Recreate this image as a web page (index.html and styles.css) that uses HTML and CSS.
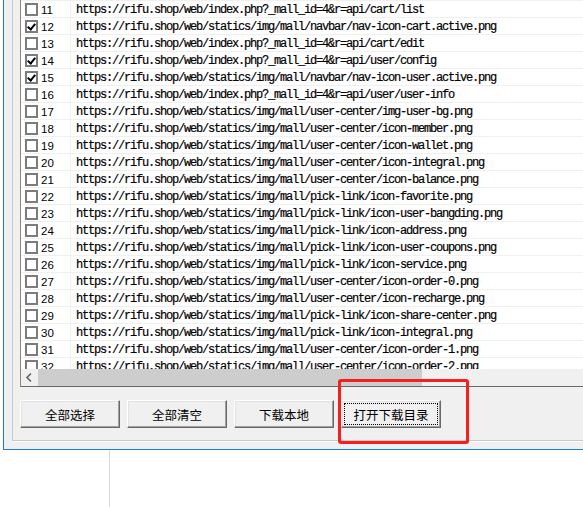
FILE: index.html
```html
<!DOCTYPE html>
<html>
<head>
    <title>下载列表</title>
    <meta charset="UTF-8">
    <link rel="stylesheet" href="styles.css">
</head>
<body>
    <div class="window">
        <div class="group">
            <div class="list">
                <div class="rows">
                    <div class="row"><span class="cell-no"><i class="box"></i>11</span><span class="cell-url">https://rifu.shop/web/index.php?_mall_id=4&amp;r=api/cart/list</span></div>
                    <div class="row"><span class="cell-no"><i class="box checked"></i>12</span><span class="cell-url">https://rifu.shop/web/statics/img/mall/navbar/nav-icon-cart.active.png</span></div>
                    <div class="row"><span class="cell-no"><i class="box"></i>13</span><span class="cell-url">https://rifu.shop/web/index.php?_mall_id=4&amp;r=api/cart/edit</span></div>
                    <div class="row"><span class="cell-no"><i class="box checked"></i>14</span><span class="cell-url">https://rifu.shop/web/index.php?_mall_id=4&amp;r=api/user/config</span></div>
                    <div class="row"><span class="cell-no"><i class="box checked"></i>15</span><span class="cell-url">https://rifu.shop/web/statics/img/mall/navbar/nav-icon-user.active.png</span></div>
                    <div class="row"><span class="cell-no"><i class="box"></i>16</span><span class="cell-url">https://rifu.shop/web/index.php?_mall_id=4&amp;r=api/user/user-info</span></div>
                    <div class="row"><span class="cell-no"><i class="box"></i>17</span><span class="cell-url">https://rifu.shop/web/statics/img/mall/user-center/img-user-bg.png</span></div>
                    <div class="row"><span class="cell-no"><i class="box"></i>18</span><span class="cell-url">https://rifu.shop/web/statics/img/mall/user-center/icon-member.png</span></div>
                    <div class="row"><span class="cell-no"><i class="box"></i>19</span><span class="cell-url">https://rifu.shop/web/statics/img/mall/user-center/icon-wallet.png</span></div>
                    <div class="row"><span class="cell-no"><i class="box"></i>20</span><span class="cell-url">https://rifu.shop/web/statics/img/mall/user-center/icon-integral.png</span></div>
                    <div class="row"><span class="cell-no"><i class="box"></i>21</span><span class="cell-url">https://rifu.shop/web/statics/img/mall/user-center/icon-balance.png</span></div>
                    <div class="row"><span class="cell-no"><i class="box"></i>22</span><span class="cell-url">https://rifu.shop/web/statics/img/mall/pick-link/icon-favorite.png</span></div>
                    <div class="row"><span class="cell-no"><i class="box"></i>23</span><span class="cell-url">https://rifu.shop/web/statics/img/mall/pick-link/icon-user-bangding.png</span></div>
                    <div class="row"><span class="cell-no"><i class="box"></i>24</span><span class="cell-url">https://rifu.shop/web/statics/img/mall/pick-link/icon-address.png</span></div>
                    <div class="row"><span class="cell-no"><i class="box"></i>25</span><span class="cell-url">https://rifu.shop/web/statics/img/mall/pick-link/icon-user-coupons.png</span></div>
                    <div class="row"><span class="cell-no"><i class="box"></i>26</span><span class="cell-url">https://rifu.shop/web/statics/img/mall/pick-link/icon-service.png</span></div>
                    <div class="row"><span class="cell-no"><i class="box"></i>27</span><span class="cell-url">https://rifu.shop/web/statics/img/mall/user-center/icon-order-0.png</span></div>
                    <div class="row"><span class="cell-no"><i class="box"></i>28</span><span class="cell-url">https://rifu.shop/web/statics/img/mall/user-center/icon-recharge.png</span></div>
                    <div class="row"><span class="cell-no"><i class="box"></i>29</span><span class="cell-url">https://rifu.shop/web/statics/img/mall/pick-link/icon-share-center.png</span></div>
                    <div class="row"><span class="cell-no"><i class="box"></i>30</span><span class="cell-url">https://rifu.shop/web/statics/img/mall/pick-link/icon-integral.png</span></div>
                    <div class="row"><span class="cell-no"><i class="box"></i>31</span><span class="cell-url">https://rifu.shop/web/statics/img/mall/user-center/icon-order-1.png</span></div>
                    <div class="row"><span class="cell-no"><i class="box"></i>32</span><span class="cell-url">https://rifu.shop/web/statics/img/mall/user-center/icon-order-2.png</span></div>
                </div>
                <div class="hscroll">
                    <span class="arrow">
                        <svg width="17" height="17" viewBox="0 0 17 17"><polyline points="10,4.5 6,8.5 10,12.5" fill="none" stroke="#606060" stroke-width="1.6"/></svg>
                    </span>
                    <span class="thumb"></span>
                </div>
            </div>

            <div class="buttons">
                <button class="btn">全部选择</button>
                <button class="btn">全部清空</button>
                <button class="btn">下载本地</button>
                <button class="btn focused"><span>打开下载目录</span></button>
            </div>
        </div>
    </div>

    <div class="below"></div>

    <!-- 标注框 -->
    <div class="mark"></div>
</body>
</html>
```

FILE: styles.css
```css
/* 整体 */
html, body {
    margin: 0;
    overflow: hidden;
}

body {
    width: 583px;
    height: 507px;
    background: #fff;
    font-family: "Liberation Sans", "Noto Sans CJK SC", sans-serif;
    position: relative;
}

/* 窗口 */
.window {
    margin-left: 3px;
    width: 700px;
    height: 449px;
    background: #f0f0f0;
    border-left: 1px solid #1a7fd4;
    border-bottom: 1px solid #1a7fd4;
    padding-left: 8px;
    box-sizing: content-box;
}

.group {
    height: 441px;
    border-left: 1px solid #c9c9c9;
    border-bottom: 1px solid #c9c9c9;
    box-shadow: 0 1px 0 #fff;
    padding-left: 7px;
    box-sizing: border-box;
}

/* 列表 */
.list {
    border-left: 1px solid #828790;
    border-bottom: 1px solid #686868;
    background: #fff;
}

.rows {
    height: 369px;
    overflow: hidden;
    border-top: 1px solid #f0f0f0;
    box-sizing: border-box;
}

.row {
    display: flex;
    height: 16px;
    border-bottom: 1px solid #f0f0f0;
    align-items: center;
}

.cell-no {
    width: 50px;
    display: flex;
    align-items: center;
    padding-left: 4px;
    padding-top: 1px;
    box-sizing: border-box;
    border-right: 1px solid #f0f0f0;
    height: 100%;
    font-size: 11.5px;
    color: #000;
}

.box {
    width: 13px;
    height: 13px;
    border: 2px solid #7c7c7c;
    box-sizing: border-box;
    background: #fff;
    margin-right: 3px;
    position: relative;
}

.box.checked::after {
    content: "";
    position: absolute;
    left: 2px;
    top: 0px;
    width: 3px;
    height: 6px;
    border-right: 2px solid #000;
    border-bottom: 2px solid #000;
    transform: rotate(40deg);
}

.cell-url {
    padding-left: 5px;
    padding-top: 2px;
    font-family: "Liberation Mono", monospace;
    font-size: 12px;
    letter-spacing: -1.2px;
    white-space: nowrap;
    color: #000;
    -webkit-text-stroke: 0.2px #000;
}

/* 横向滚动条 */
.hscroll {
    display: flex;
    height: 17px;
    background: #f0f0f0;
}

.arrow {
    width: 17px;
    height: 17px;
}

.thumb {
    width: 384px;
    background: #cdcdcd;
}

/* 按钮 */
.buttons {
    display: flex;
    gap: 7px;
    margin-top: 13px;
}

.btn {
    width: 100px;
    height: 28px;
    padding: 0;
    background: #f0f0f0;
    border: 1px solid;
    border-color: #fff #696969 #696969 #fff;
    box-shadow: inset -1px -1px 0 #a0a0a0, inset 1px 1px 0 #e3e3e3;
    font-family: "Noto Sans CJK SC", sans-serif;
    font-size: 12.5px;
    color: #000;
}

.btn.focused {
    padding: 2px;
}

.btn.focused span {
    display: flex;
    align-items: center;
    justify-content: center;
    height: 100%;
    border: 1px dotted #000;
    box-sizing: border-box;
}

/* 窗口下方 */
.below {
    margin-left: 109px;
    width: 0;
    height: 57px;
    border-left: 1px solid #d9d9d9;
}

.mark {
    position: absolute;
    left: 338px;
    top: 379px;
    width: 131px;
    height: 65px;
    border: 3px solid #f42020;
    border-radius: 3px;
    box-sizing: border-box;
}
```
